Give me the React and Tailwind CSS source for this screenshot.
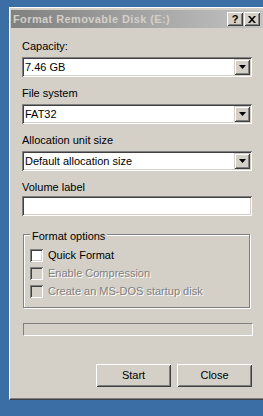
const SUNKEN =
  "shadow-[inset_1px_1px_0_#808080,inset_-1px_-1px_0_#ffffff,inset_2px_2px_0_#404040,inset_-2px_-2px_0_#d4d0c8]";
const RAISED =
  "shadow-[inset_1px_1px_0_#ffffff,inset_-1px_-1px_0_#404040,inset_2px_2px_0_#d4d0c8,inset_-2px_-2px_0_#808080]";
const RAISED_SMALL =
  "shadow-[inset_1px_1px_0_#d4d0c8,inset_-1px_-1px_0_#404040,inset_2px_2px_0_#ffffff,inset_-2px_-2px_0_#808080]";

function Combo({ value, className = "" }) {
  return (
    <div className={`w-[230px] h-[20px] bg-white p-[2px] flex ${SUNKEN} ${className}`}>
      <div className="flex-1 flex items-center pl-[1px] whitespace-nowrap">{value}</div>
      <div className={`w-[16px] h-[16px] bg-[#d4d0c8] flex items-center justify-center ${RAISED_SMALL}`}>
        <svg width="7" height="4" viewBox="0 0 7 4">
          <polygon points="0,0 7,0 3.5,4" fill="#000" />
        </svg>
      </div>
    </div>
  );
}

function Check({ label, disabled }) {
  return (
    <div className="h-[13px] flex items-center">
      <div className={`w-[13px] h-[13px] ${disabled ? "bg-[#d4d0c8]" : "bg-white"} ${SUNKEN}`} />
      <span
        className={`ml-[5px] whitespace-nowrap ${
          disabled ? "text-[#808080] [text-shadow:1px_1px_0_#ffffff]" : "text-black"
        }`}
      >
        {label}
      </span>
    </div>
  );
}

export default function App() {
  return (
    <div className="w-[263px] h-[416px] overflow-hidden bg-[#3a6ea5] pt-[7px] pl-[9px] font-['Liberation_Sans',Arial,sans-serif] text-[11px] leading-[13px] text-black">
      <div className="w-[258px] h-[393px] border border-t-white border-l-white border-r-[#404040] border-b-[#404040] bg-[#d4d0c8]">
        <div className="h-full border-r border-b border-r-[#808080] border-b-[#808080] pt-[2px] pl-[1px] pr-[1px]">
          {/* Title bar */}
          <div className="h-[18px] flex items-center bg-[linear-gradient(to_right,#808080,#c4c4c4)] pl-[2px] pr-[4px]">
            <span className="flex-1 font-bold text-[#d4d0c8] tracking-[0.4px] whitespace-nowrap">
              Format Removable Disk (E:)
            </span>
            <div className="flex gap-[1px]">
              <div className={`w-[16px] h-[14px] bg-[#d4d0c8] flex items-center justify-center font-bold text-[11px] leading-[14px] ${RAISED}`}>
                ?
              </div>
              <div className={`w-[16px] h-[14px] bg-[#d4d0c8] flex items-center justify-center ${RAISED}`}>
                <svg width="8" height="7" viewBox="0 0 8 7">
                  <path d="M0 0h2l2 2.3L6 0h2L5 3.5 8 7H6L4 4.7 2 7H0l3-3.5z" fill="#000" />
                </svg>
              </div>
            </div>
          </div>

          {/* Body */}
          <div className="pl-[11px]">
            <div className="mt-[12px]">Capacity:</div>
            <Combo className="mt-[4px]" value="7.46 GB" />
            <div className="mt-[10px]">File system</div>
            <Combo className="mt-[4px]" value="FAT32" />
            <div className="mt-[10px]">Allocation unit size</div>
            <Combo className="mt-[4px]" value="Default allocation size" />
            <div className="mt-[10px]">Volume label</div>
            <div className={`mt-[2px] w-[230px] h-[20px] bg-white ${SUNKEN}`} />

            {/* Group box */}
            <div className="relative mt-[18px] ml-[1px] w-[227px] h-[74px] border border-[#808080] shadow-[1px_1px_0_#ffffff,inset_1px_1px_0_#ffffff] pt-[14px] pl-[6px]">
              <div className="absolute left-[6px] top-[-5px] px-[2px] bg-[#d4d0c8] whitespace-nowrap">
                Format options
              </div>
              <div className="flex flex-col gap-[5px]">
                <Check label="Quick Format" />
                <Check label="Enable Compression" disabled />
                <Check label="Create an MS-DOS startup disk" disabled />
              </div>
            </div>

            {/* Progress bar */}
            <div className="mt-[15px] ml-[1px] w-[230px] h-[13px] border border-t-[#808080] border-l-[#808080] border-b-white border-r-white" />

            {/* Buttons */}
            <div className="mt-[28px] w-[230px] flex justify-end gap-[6px]">
              <div className={`w-[75px] h-[23px] flex items-center justify-center ${RAISED}`}>Start</div>
              <div className={`w-[75px] h-[23px] flex items-center justify-center ${RAISED}`}>Close</div>
            </div>
          </div>
        </div>
      </div>
    </div>
  );
}
